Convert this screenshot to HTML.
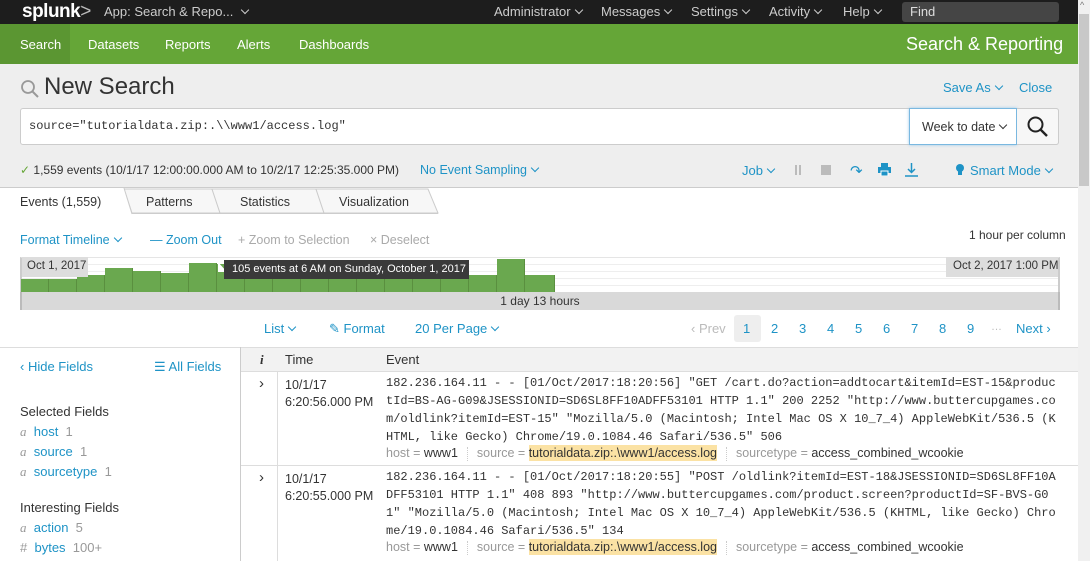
<!DOCTYPE html>
<html><head><meta charset="utf-8"><style>
*{margin:0;padding:0;box-sizing:border-box}
body{width:1090px;height:561px;overflow:hidden;position:relative;background:#fff;font-family:"Liberation Sans",Arial,sans-serif;font-size:13px;color:#333}
.a{position:absolute;white-space:nowrap}
.blue{color:#1e93c6}
.chev{display:inline-block;width:6px;height:6px;border-right:1.3px solid currentColor;border-bottom:1.3px solid currentColor;transform:rotate(45deg);margin-left:5px;position:relative;top:-3px}
.mono{font-family:"Liberation Mono","DejaVu Sans Mono",monospace;font-size:12px;line-height:18px;color:#333;white-space:pre}
.meta{font-size:12.5px;color:#999}
.meta b{font-weight:normal;color:#333}
.hl{background:#fbe2a4;color:#333;padding:1px 0}
.sep{display:inline-block;width:0;height:14px;border-left:1px dotted #ccc;margin:0 9px;vertical-align:middle}
.bar{position:absolute;bottom:0;background:#6aa84f;border-right:1px solid #5a8f3f}
.pg{position:absolute;top:319px;font-size:13px;color:#1e93c6}
</style></head><body>
<div class="a" style="left:0;top:0;width:1090px;height:24px;background:#1d1d1d"></div>
<div class="a" style="left:22px;top:1px;color:#fff;font-weight:bold;font-size:19px;letter-spacing:-0.5px">splunk<span style="font-weight:normal;color:#bbb">&gt;</span></div>
<div class="a" style="left:104px;top:4px;color:#ccc">App: Search &amp; Repo... <span class="chev"></span></div>
<div class="a" style="left:494px;top:4px;color:#ccc">Administrator<span class="chev"></span></div>
<div class="a" style="left:601px;top:4px;color:#ccc">Messages<span class="chev"></span></div>
<div class="a" style="left:691px;top:4px;color:#ccc">Settings<span class="chev"></span></div>
<div class="a" style="left:769px;top:4px;color:#ccc">Activity<span class="chev"></span></div>
<div class="a" style="left:843px;top:4px;color:#ccc">Help<span class="chev"></span></div>
<div class="a" style="left:902px;top:2px;width:157px;height:20px;background:#454545;border-radius:3px;color:#ddd;padding:2px 8px">Find</div>
<div class="a" style="left:0;top:24px;width:1078px;height:40px;background:#65a637"></div>
<div class="a" style="left:0;top:24px;width:70px;height:40px;background:#5b9632"></div>
<div class="a" style="left:20px;top:37px;color:#fff">Search</div>
<div class="a" style="left:88px;top:37px;color:#fff">Datasets</div>
<div class="a" style="left:165px;top:37px;color:#fff">Reports</div>
<div class="a" style="left:237px;top:37px;color:#fff">Alerts</div>
<div class="a" style="left:299px;top:37px;color:#fff">Dashboards</div>
<div class="a" style="left:906px;top:34px;color:#fff;font-size:18px">Search &amp; Reporting</div>
<div class="a" style="left:0;top:64px;width:1078px;height:124px;background:#eee;border-bottom:1px solid #ccc"></div>
<svg class="a" style="left:20px;top:79px" width="20" height="20"><circle cx="8" cy="8" r="6" fill="none" stroke="#999" stroke-width="1.8"/><line x1="12.5" y1="12.5" x2="18" y2="18" stroke="#999" stroke-width="2"/></svg>
<div class="a" style="left:44px;top:73px;font-size:24px;color:#333">New Search</div>
<div class="a blue" style="left:943px;top:80px">Save As<span class="chev"></span></div>
<div class="a blue" style="left:1019px;top:80px">Close</div>
<div class="a" style="left:20px;top:108px;width:1039px;height:37px;background:#fff;border:1px solid #ccc;border-radius:3px"></div>
<div class="a mono" style="left:29px;top:117px;font-size:12px">source="tutorialdata.zip:.\\www1/access.log"</div>
<div class="a" style="left:909px;top:108px;width:108px;height:37px;border:1px solid #7ab8e0;background:#fff;box-shadow:0 0 3px #9cc9ea;padding:11px 0 0 12px;font-size:12.5px">Week to date<span class="chev"></span></div>
<div class="a" style="left:1017px;top:108px;width:42px;height:37px;background:#f7f7f7;border:1px solid #ccc;border-left:none;border-radius:0 3px 3px 0"></div>
<svg class="a" style="left:1026px;top:115px" width="24" height="24"><circle cx="9.5" cy="9.5" r="7" fill="none" stroke="#222" stroke-width="2"/><line x1="14.5" y1="14.5" x2="21" y2="21" stroke="#222" stroke-width="2.4"/></svg>
<div class="a" style="left:20px;top:163px;font-size:12px"><span style="color:#65a637">✓</span> 1,559 events (10/1/17 12:00:00.000 AM to 10/2/17 12:25:35.000 PM)</div>
<div class="a blue" style="left:420px;top:163px;font-size:12.5px">No Event Sampling<span class="chev"></span></div>
<div class="a blue" style="left:742px;top:163px">Job<span class="chev"></span></div>
<div class="a" style="left:795px;top:165px;width:2px;height:10px;background:#bbb;box-shadow:4px 0 0 #bbb"></div>
<div class="a" style="left:821px;top:165px;width:10px;height:10px;background:#bbb"></div>
<div class="a blue" style="left:850px;top:162px;font-size:15px">↷</div>
<svg class="a" style="left:878px;top:163px" width="13" height="13"><rect x="3" y="0" width="7" height="4" fill="#1e93c6"/><rect x="0" y="4" width="13" height="6" fill="#1e93c6"/><rect x="3" y="8" width="7" height="5" fill="#1e93c6" stroke="#fff" stroke-width="1"/></svg>
<svg class="a" style="left:905px;top:163px" width="13" height="14"><line x1="6.5" y1="0" x2="6.5" y2="9" stroke="#1e93c6" stroke-width="1.5"/><polyline points="3,6 6.5,9.5 10,6" fill="none" stroke="#1e93c6" stroke-width="1.5"/><line x1="0" y1="13" x2="13" y2="13" stroke="#1e93c6" stroke-width="1.5"/></svg>
<svg class="a" style="left:955px;top:163px" width="10" height="14"><circle cx="5" cy="5" r="4" fill="#1e93c6"/><rect x="3" y="8" width="4" height="4" fill="#1e93c6"/></svg>
<div class="a blue" style="left:970px;top:163px">Smart Mode<span class="chev"></span></div>
<svg class="a" style="left:0;top:188px" width="1078" height="27">
<path d="M124 1 L212 1 L220 25 L132 25 Z" fill="#f7f7f7" stroke="#ccc"/>
<path d="M212 1 L316 1 L324 25 L220 25 Z" fill="#f7f7f7" stroke="#ccc"/>
<path d="M316 1 L428 1 L438 25 L324 25 Z" fill="#f7f7f7" stroke="#ccc"/>
<path d="M0 0 L124 0 L132 26 L0 26 Z" fill="#fff"/>
<line x1="124" y1="0" x2="132" y2="26" stroke="#ccc"/>
<line x1="132" y1="25.5" x2="438" y2="25.5" stroke="#ccc"/>
</svg>
<div class="a" style="left:20px;top:195px;font-size:12.5px">Events (1,559)</div>
<div class="a" style="left:146px;top:195px;font-size:12.5px">Patterns</div>
<div class="a" style="left:240px;top:195px;font-size:12.5px">Statistics</div>
<div class="a" style="left:339px;top:195px;font-size:12.5px">Visualization</div>
<div class="a blue" style="left:20px;top:233px;font-size:12.5px">Format Timeline<span class="chev"></span></div>
<div class="a blue" style="left:150px;top:233px;font-size:12.5px">— Zoom Out</div>
<div class="a" style="left:238px;top:233px;color:#aaa;font-size:12.5px">+ Zoom to Selection</div>
<div class="a" style="left:370px;top:233px;color:#aaa;font-size:12.5px">× Deselect</div>
<div class="a" style="left:969px;top:228px;font-size:12px">1 hour per column</div>
<div class="a" style="left:20px;top:257px;width:1040px;height:35px;background:#fff;border-top:1px solid #e5e5e5;border-right:2px solid #ccc;border-left:2px solid #ccc;background-image:repeating-linear-gradient(#fff 0,#fff 6px,#eee 6px,#eee 7px)"></div>
<div class="a" style="left:20px;top:257px;width:535px;height:35px">
<div class="bar" style="left:1px;width:28px;height:13px"></div>
<div class="bar" style="left:29px;width:28px;height:13px"></div>
<div class="bar" style="left:57px;width:28px;height:17px"></div>
<div class="bar" style="left:85px;width:28px;height:24px"></div>
<div class="bar" style="left:113px;width:28px;height:21px"></div>
<div class="bar" style="left:141px;width:28px;height:19px"></div>
<div class="bar" style="left:169px;width:28px;height:29px"></div>
<div class="bar" style="left:197px;width:28px;height:28px"></div>
<div class="bar" style="left:225px;width:28px;height:14px"></div>
<div class="bar" style="left:253px;width:28px;height:14px"></div>
<div class="bar" style="left:281px;width:28px;height:14px"></div>
<div class="bar" style="left:309px;width:28px;height:14px"></div>
<div class="bar" style="left:337px;width:28px;height:14px"></div>
<div class="bar" style="left:365px;width:28px;height:14px"></div>
<div class="bar" style="left:393px;width:28px;height:14px"></div>
<div class="bar" style="left:421px;width:28px;height:17px"></div>
<div class="bar" style="left:449px;width:28px;height:17px"></div>
<div class="bar" style="left:477px;width:28px;height:33px"></div>
<div class="bar" style="left:505px;width:30px;height:17px"></div>
</div>
<div class="a" style="left:22px;top:257px;width:66px;height:20px;background:#ddd;font-size:11.5px;padding:3px 0 0 5px">Oct 1, 2017</div>
<div class="a" style="left:946px;top:257px;width:112px;height:20px;background:#ddd;font-size:11.5px;padding:3px 0 0 7px">Oct 2, 2017 1:00 PM</div>
<div class="a" style="left:218px;top:262px;width:9px;height:10px;background:#fff;clip-path:polygon(0 0,100% 100%,0 100%)"></div>
<div class="a" style="left:224px;top:260px;width:245px;height:19px;background:#3a3a3a;color:#fff;font-size:11px;padding:3px 0 0 8px;overflow:hidden">105 events at 6 AM on Sunday, October 1, 2017</div>
<div class="a" style="left:20px;top:292px;width:1040px;height:18px;background:#d9d9d9;border-left:2px solid #bbb;border-right:2px solid #bbb;font-size:12px;text-align:center;padding-top:2px">1 day 13 hours</div>
<div class="a blue" style="left:264px;top:321px">List<span class="chev"></span></div>
<div class="a blue" style="left:329px;top:321px">✎ Format</div>
<div class="a blue" style="left:415px;top:321px">20 Per Page<span class="chev"></span></div>
<div class="a" style="left:691px;top:321px;color:#bbb">‹ Prev</div>
<div class="a" style="left:734px;top:315px;width:27px;height:27px;background:#eee;border-radius:3px"></div>
<div class="pg" style="left:743px;top:321px">1</div>
<div class="pg" style="left:771px;top:321px">2</div>
<div class="pg" style="left:799px;top:321px">3</div>
<div class="pg" style="left:827px;top:321px">4</div>
<div class="pg" style="left:855px;top:321px">5</div>
<div class="pg" style="left:883px;top:321px">6</div>
<div class="pg" style="left:911px;top:321px">7</div>
<div class="pg" style="left:939px;top:321px">8</div>
<div class="pg" style="left:967px;top:321px">9</div>
<div class="a" style="left:991px;top:321px;color:#bbb;font-size:11px">…</div>
<div class="pg" style="left:1016px;top:321px">Next ›</div>
<div class="a" style="left:0;top:347px;width:1078px;height:1px;background:#ddd"></div>
<div class="a" style="left:240px;top:347px;width:1px;height:214px;background:#ccc"></div>
<div class="a blue" style="left:20px;top:359px">‹ Hide Fields</div>
<div class="a blue" style="left:154px;top:359px">☰ All Fields</div>
<div class="a" style="left:20px;top:404px">Selected Fields</div>
<div class="a" style="left:20px;top:424px"><i style="color:#999;font-family:'Liberation Serif',serif">a</i> <span class="blue">&nbsp;host</span> <span style="color:#999">&nbsp;1</span></div>
<div class="a" style="left:20px;top:444px"><i style="color:#999;font-family:'Liberation Serif',serif">a</i> <span class="blue">&nbsp;source</span> <span style="color:#999">&nbsp;1</span></div>
<div class="a" style="left:20px;top:464px"><i style="color:#999;font-family:'Liberation Serif',serif">a</i> <span class="blue">&nbsp;sourcetype</span> <span style="color:#999">&nbsp;1</span></div>
<div class="a" style="left:20px;top:500px">Interesting Fields</div>
<div class="a" style="left:20px;top:520px"><i style="color:#999;font-family:'Liberation Serif',serif">a</i> <span class="blue">&nbsp;action</span> <span style="color:#999">&nbsp;5</span></div>
<div class="a" style="left:20px;top:540px"><span style="color:#999">#</span> <span class="blue">&nbsp;bytes</span> <span style="color:#999">&nbsp;100+</span></div>
<div class="a" style="left:241px;top:348px;width:837px;height:24px;background:#f2f2f2;border-bottom:1px solid #ddd"></div>
<div class="a" style="left:260px;top:352px;font-family:'Liberation Serif',serif;font-style:italic;font-weight:bold">i</div>
<div class="a" style="left:285px;top:352px">Time</div>
<div class="a" style="left:386px;top:352px">Event</div>
<div class="a" style="left:277px;top:372px;width:1px;height:189px;background:#ddd"></div>
<div class="a" style="left:241px;top:465px;width:837px;height:1px;background:#ddd"></div>
<div class="a" style="left:259px;top:375px;font-size:15px">›</div>
<div class="a" style="left:285px;top:377px;line-height:17px;font-size:12.5px">10/1/17<br>6:20:56.000 PM</div>
<div class="a mono" style="left:386px;top:374px">182.236.164.11 - - [01/Oct/2017:18:20:56] "GET /cart.do?action=addtocart&amp;itemId=EST-15&amp;produc
tId=BS-AG-G09&amp;JSESSIONID=SD6SL8FF10ADFF53101 HTTP 1.1" 200 2252 "http://www.buttercupgames.co
m/oldlink?itemId=EST-15" "Mozilla/5.0 (Macintosh; Intel Mac OS X 10_7_4) AppleWebKit/536.5 (K
HTML, like Gecko) Chrome/19.0.1084.46 Safari/536.5" 506</div>
<div class="a meta" style="left:386px;top:446px">host = <b>www1</b><span class="sep"></span>source = <span class="hl">tutorialdata.zip:.\www1/access.log</span><span class="sep"></span>sourcetype = <b>access_combined_wcookie</b></div>
<div class="a" style="left:259px;top:469px;font-size:15px">›</div>
<div class="a" style="left:285px;top:471px;line-height:17px;font-size:12.5px">10/1/17<br>6:20:55.000 PM</div>
<div class="a mono" style="left:386px;top:468px">182.236.164.11 - - [01/Oct/2017:18:20:55] "POST /oldlink?itemId=EST-18&amp;JSESSIONID=SD6SL8FF10A
DFF53101 HTTP 1.1" 408 893 "http://www.buttercupgames.com/product.screen?productId=SF-BVS-G0
1" "Mozilla/5.0 (Macintosh; Intel Mac OS X 10_7_4) AppleWebKit/536.5 (KHTML, like Gecko) Chro
me/19.0.1084.46 Safari/536.5" 134</div>
<div class="a meta" style="left:386px;top:540px">host = <b>www1</b><span class="sep"></span>source = <span class="hl">tutorialdata.zip:.\www1/access.log</span><span class="sep"></span>sourcetype = <b>access_combined_wcookie</b></div>
<div class="a" style="left:1078px;top:0;width:12px;height:561px;background:#f0f0f0"></div>
<div class="a" style="left:1079px;top:14px;width:10px;height:172px;background:#c8c8c8"></div>
<div class="a" style="left:1080px;top:0;font-size:9px;color:#777">^</div>
</body></html>
